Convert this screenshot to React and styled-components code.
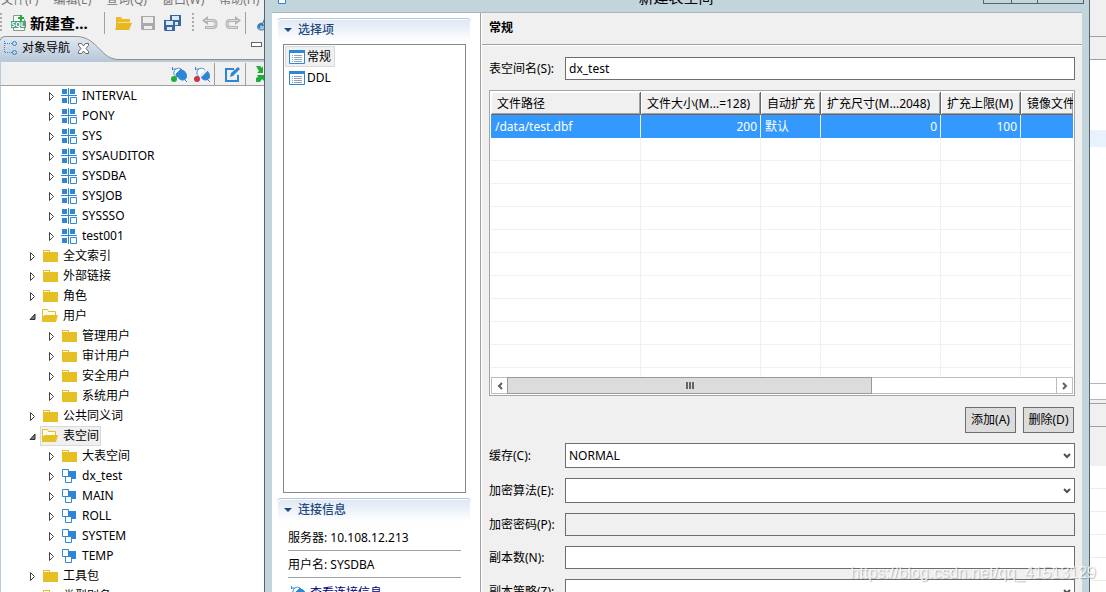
import { useState } from "react";
import styled, { createGlobalStyle, css } from "styled-components";

const tree = [
  { name: "INTERVAL", icon: "schema", level: 2 },
  { name: "PONY", icon: "schema", level: 2 },
  { name: "SYS", icon: "schema", level: 2 },
  { name: "SYSAUDITOR", icon: "schema", level: 2 },
  { name: "SYSDBA", icon: "schema", level: 2 },
  { name: "SYSJOB", icon: "schema", level: 2 },
  { name: "SYSSSO", icon: "schema", level: 2 },
  { name: "test001", icon: "schema", level: 2 },
  { name: "全文索引", icon: "folder", level: 1 },
  { name: "外部链接", icon: "folder", level: 1 },
  { name: "角色", icon: "folder", level: 1 },
  { name: "用户", icon: "folderOpen", level: 1, open: true },
  { name: "管理用户", icon: "folder", level: 2 },
  { name: "审计用户", icon: "folder", level: 2 },
  { name: "安全用户", icon: "folder", level: 2 },
  { name: "系统用户", icon: "folder", level: 2 },
  { name: "公共同义词", icon: "folder", level: 1 },
  { name: "表空间", icon: "folderOpen", level: 1, open: true, selected: true },
  { name: "大表空间", icon: "folder", level: 2 },
  { name: "dx_test", icon: "space", level: 2 },
  { name: "MAIN", icon: "space", level: 2 },
  { name: "ROLL", icon: "space", level: 2 },
  { name: "SYSTEM", icon: "space", level: 2 },
  { name: "TEMP", icon: "space", level: 2 },
  { name: "工具包", icon: "folder", level: 1 },
  { name: "类型别名", icon: "folder", level: 1 },
];

const columns = [
  { title: "文件路径", width: 150, value: "/data/test.dbf" },
  { title: "文件大小(M...=128)", width: 120, value: "200", right: true },
  { title: "自动扩充", width: 60, value: "默认" },
  { title: "扩充尺寸(M...2048)", width: 120, value: "0", right: true },
  { title: "扩充上限(M)", width: 80, value: "100", right: true },
  { title: "镜像文件", width: null, value: "" },
];

const emptyRows = Array.from({ length: 11 }, (_, i) => i);

const Icon = ({ children, width = 16, height = 16 }) => (
  <Svg width={width} height={height} viewBox={`0 0 ${width} ${height}`} aria-hidden="true">
    {children}
  </Svg>
);

const icons = {
  schema: (
    <Icon>
      <path fill="#2e86d6" d="M1 1h5v5H1zM9 1h5v5H9zM1 10h5v5H1zM0 7h16v1H0zM7 0h1v16H7z" />
      <path fill="#fff" stroke="#2e86d6" d="M9.5 9.500h6v6h-6z" />
    </Icon>
  ),
  folder: (
    <Icon>
      <path fill="#e6bf24" d="M1 2h7v2h8v10H1z" />
      <path fill="#fff" d="M2 3h5v1H2z" />
    </Icon>
  ),
  folderOpen: (
    <Icon>
      <path fill="#fffdf2" stroke="#e6bf24" d="M.5 13V1.500h5l1 2h7V8" />
      <path fill="#e6bf24" d="M0 14V9l3-2h13l-2 7z" />
    </Icon>
  ),
  space: (
    <Icon>
      <path fill="#2e86d6" d="M7 3h8v8H7z" />
      <path fill="#fff" stroke="#2e86d6" d="M1.500 1.500h6v7h-6zM4.500 8.500h6v6h-6z" />
    </Icon>
  ),
};

const Plug = ({ off }) => (
  <Icon>
    <g stroke="#2e86d6" fill="none">
      <path d="M1.500 1v3l1-1h3M13 13l3 3" />
      <path fill="#fff" d="M3.500 4.500c2-3 6-3 8 0l-6 6c-3-1-3-4-2-6z" />
      <path fill="#2e86d6" d="M6.500 10.500l6-6c3 2 4 6 2 8.500-3 2-6 1-8-2.500z" />
      {off ? <path stroke="#f0f0f0" strokeWidth="2" d="M5 12L13 4" /> : <path fill="#2e86d6" d="M5 8l5-5 2 2-6 6z" />}
    </g>
    <circle cx="3" cy="13" r="3" fill={off ? "#d0304a" : "#1eae35"} />
  </Icon>
);

const ListIcon = () => (
  <Icon height={14}>
    <path fill="#fff" stroke="#2e86d6" d="M.5.5h15v13H.5z" />
    <path fill="#2e86d6" d="M0 0h16v3H0z" />
    <path stroke="#8fa3b8" d="M3 5.500h1M5 5.500h8M3 7.500h1M5 7.500h8M3 9.500h1M5 9.500h8M3 11.500h1M5 11.500h8" />
  </Icon>
);

const SqlIcon = () => (
  <Icon width={17}>
    <path fill="#f7faf8" stroke="#7d9c8d" d="M3.500 15.500V.5h7l4 4v11z" />
    <path fill="#4d9f83" d="M1 6h15v7H1z" />
    <text x="8" y="12" textAnchor="middle" fontSize="7" fontWeight="bold" fill="#fff">SQL</text>
    <path fill="#1eae35" d="M10 0h2v2h2v2h-2v2h-2V4H8V2h2z" />
  </Icon>
);

const Disk = ({ color, face, x = 0, y = 0, size = 14 }) => (
  <g transform={`translate(${x} ${y})`}>
    <path fill={color} d={`M0 0h${size}v${size}H1l-1-1z`} />
    <path fill={face} d={`M2 1h${size - 4}v${Math.floor(size / 2) - 1}H2z`} />
    <path fill={face} d={`M3 ${size - 4}h${size - 6}v3H3z`} />
  </g>
);

const App = () => {
  const [name, setName] = useState("dx_test");

  return (
    <Screen>
      <GlobalStyle />
      <Workbench>
        <MenuBar>
          <span>文件(F)</span>
          <span>编辑(E)</span>
          <span>查询(Q)</span>
          <span>窗口(W)</span>
          <span>帮助(H)</span>
        </MenuBar>
        <Toolbar>
          <Grip />
          <NewQuery>
            <SqlIcon />
            新建查...
          </NewQuery>
          <Divider />
          <Tools>
            <ToolButton aria-label="打开">
              <Icon width={17}>
                <path fill="#e9bc28" d="M1 14V2h5l1 2h8v3H4z" />
                <path fill="#fbe28a" d="M3 7h12v1H3z" />
                <path fill="#e6b71e" d="M0 15l3-7h14l-3 7z" />
              </Icon>
            </ToolButton>
            <ToolButton aria-label="保存">
              <Icon>
                <Disk color="#aaa" face="#eee" x={1} y={1} />
              </Icon>
            </ToolButton>
            <ToolButton aria-label="全部保存">
              <Icon width={17}>
                <Disk color="#38669f" face="#dce8f5" x={6} size={11} />
                <Disk color="#38669f" face="#dce8f5" y={5} size={11} />
              </Icon>
            </ToolButton>
          </Tools>
          <Grip />
          <Tools>
            <ToolButton aria-label="撤销">
              <Icon>
                <path fill="none" stroke="#b3b3b3" strokeWidth="3" d="M5 5.500h6c4 0 4 7 0 7H3" />
                <path fill="#b3b3b3" d="M0 5.500L6 1v9z" />
                <path fill="none" stroke="#dcdcdc" d="M3 5.500h8c4 0 4 7 0 7H4" />
              </Icon>
            </ToolButton>
            <ToolButton aria-label="重做">
              <Icon>
                <path fill="none" stroke="#b3b3b3" strokeWidth="3" d="M11 5.500H5c-4 0-4 7 0 7h8" />
                <path fill="#b3b3b3" d="M16 5.500L10 1v9z" />
                <path fill="none" stroke="#dcdcdc" d="M13 5.500H5c-4 0-4 7 0 7h7" />
              </Icon>
            </ToolButton>
          </Tools>
          <Divider />
          <Tools>
            <Icon>
              <path fill="#9cc4e4" stroke="#2e78b8" d="M1.500 12.500c0-3 2-5 5-4L9 3v11c-3 2-7 1-7.500-1.500z" />
              <path fill="none" stroke="#2e78b8" strokeWidth="2" d="M4 13a2 2 0 1 1 3-2" />
            </Icon>
          </Tools>
        </Toolbar>

        <TabBar>
          <TabShape width="120" height="24" viewBox="0 0 120 24" aria-hidden="true">
            <defs>
              <linearGradient id="tab" x1="0" y1="0" x2="0" y2="1">
                <stop offset="0" stopColor="#e2e8ee" />
                <stop offset="1" stopColor="#b9c9da" />
              </linearGradient>
            </defs>
            <path fill="url(#tab)" d="M0 24V.5h76c12 0 18 7 24 13s10 10 20 10v.5z" />
            <path fill="none" stroke="#8f8f8f" d="M0 4.500Q1 .5 5 .5h71c12 0 18 7 24 13s10 10 20 10" />
          </TabShape>
          <Tab>
            <Icon width={15}>
              <path stroke="#2e86d6" strokeDasharray="1 1" fill="none" d="M1.500 1v12M2 3.500h7M2 12.500h7" />
              <circle cx="11.500" cy="3.500" r="2" fill="none" stroke="#2e86d6" />
              <circle cx="11.500" cy="12.500" r="2" fill="none" stroke="#2e86d6" />
            </Icon>
            对象导航
            <CloseButton aria-label="关闭">
              <Icon width={11} height={11}>
                <path
                  fill="#fff"
                  stroke="#666"
                  d="M.5.5h3l2 2.500 2-2.500h3v2L8 5.500l2.500 3v2h-3l-2-2.500-2 2.500h-3v-2L3 5.500l-2.500-3z"
                />
              </Icon>
            </CloseButton>
          </Tab>
          <Minimize aria-label="最小化" />
        </TabBar>

        <ViewToolbar>
          <Tools>
            <ToolButton aria-label="连接">
              <Plug />
            </ToolButton>
            <ToolButton aria-label="断开">
              <Plug off />
            </ToolButton>
          </Tools>
          <Divider />
          <Tools>
            <ToolButton aria-label="编辑">
              <Icon>
                <path fill="none" stroke="#2e86d6" strokeWidth="2" d="M9 3H1v12h12V9" />
                <path fill="#2e86d6" d="M5 11l1-4 7-6 2 2-7 7z" />
              </Icon>
            </ToolButton>
          </Tools>
          <Divider />
          <Tools>
            <ToolButton aria-label="展开">
              <Icon>
                <path
                  fill="#1eae35"
                  d="M0 0h4l2 2 1-2v7H1l2-2zM0 16v-4l2-1-1-2h7v6l-2-2-2 3z"
                />
              </Icon>
            </ToolButton>
          </Tools>
        </ViewToolbar>

        <Tree>
          {tree.map((node) => (
            <TreeRow key={node.name} $level={node.level}>
              <Icon width={7} height={9}>
                {node.open ? (
                  <path fill="#777" stroke="#333" d="M6 2v5.500H1z" />
                ) : (
                  <path fill="#fff" stroke="#444" d="M1.500.5v8l4-4z" />
                )}
              </Icon>
              <TreeLabel $selected={node.selected}>
                {icons[node.icon]}
                {node.name}
              </TreeLabel>
            </TreeRow>
          ))}
        </Tree>
      </Workbench>

      <Dialog>
        <TitleBar>
          <Icon width={8} height={12}>
            <path fill="#fff" stroke="#2e86d6" d="M.5.5h7v11h-7z" />
          </Icon>
          <Title>新建表空间</Title>
          <WindowButtons>
            <WindowButton aria-label="最小化" $width={28} />
            <WindowButton aria-label="最大化" $width={26} />
            <WindowButton aria-label="关闭" $width={46} />
          </WindowButtons>
        </TitleBar>
        <Client>
          <Side>
            <SectionTitle>选择项</SectionTitle>
            <OptionList>
              <Option $selected>
                <ListIcon />
                常规
              </Option>
              <Option>
                <ListIcon />
                DDL
              </Option>
            </OptionList>
            <SectionTitle>连接信息</SectionTitle>
            <Info>服务器: 10.108.12.213</Info>
            <Info>用户名: SYSDBA</Info>
            <InfoLink href="#connection">
              <Plug />
              查看连接信息
            </InfoLink>
          </Side>

          <Page>
            <PageTitle>常规</PageTitle>
            <Form>
              <Field>
                <Label htmlFor="name">表空间名(S):</Label>
                <Input id="name" value={name} onChange={(e) => setName(e.target.value)} />
              </Field>

              <TableBox>
                <TableView>
                  <Table>
                    <colgroup>
                      {columns.map((col) => (
                        <col key={col.title} width={col.width || undefined} />
                      ))}
                    </colgroup>
                    <thead>
                      <tr>
                        {columns.map((col) => (
                          <HeadCell key={col.title}>{col.title}</HeadCell>
                        ))}
                      </tr>
                    </thead>
                    <tbody>
                      <FileRow>
                        {columns.map((col) => (
                          <Cell key={col.title} $right={col.right}>
                            {col.value}
                          </Cell>
                        ))}
                      </FileRow>
                      {emptyRows.map((row) => (
                        <tr key={row}>
                          {columns.map((col) => (
                            <Cell key={col.title} />
                          ))}
                        </tr>
                      ))}
                    </tbody>
                  </Table>
                </TableView>
                <ScrollBar>
                  <ScrollButton aria-label="向左滚动">
                    <Icon width={6} height={8}>
                      <path fill="none" stroke="#606060" strokeWidth="2" d="M5 1L2 4l3 3" />
                    </Icon>
                  </ScrollButton>
                  <ScrollTrack>
                    <Thumb>
                      <Icon width={8} height={7}>
                        <path fill="#666" d="M0 0h2v7H0zM3 0h2v7H3zM6 0h2v7H6z" />
                      </Icon>
                    </Thumb>
                  </ScrollTrack>
                  <ScrollButton aria-label="向右滚动">
                    <Icon width={6} height={8}>
                      <path fill="none" stroke="#606060" strokeWidth="2" d="M1 1l3 3-3 3" />
                    </Icon>
                  </ScrollButton>
                </ScrollBar>
              </TableBox>

              <Actions>
                <Button>添加(A)</Button>
                <Button>删除(D)</Button>
              </Actions>

              <Field>
                <Label htmlFor="cache">缓存(C):</Label>
                <SelectField id="cache" options={["NORMAL", "KEEP"]} />
              </Field>
              <Field>
                <Label htmlFor="cipher">加密算法(E):</Label>
                <SelectField id="cipher" options={[""]} />
              </Field>
              <Field>
                <Label htmlFor="password">加密密码(P):</Label>
                <Input id="password" type="password" disabled />
              </Field>
              <Field>
                <Label htmlFor="copies">副本数(N):</Label>
                <Input id="copies" />
              </Field>
              <Field>
                <Label htmlFor="policy">副本策略(Z):</Label>
                <SelectField id="policy" options={[""]} />
              </Field>
            </Form>
          </Page>
        </Client>
      </Dialog>

      <Behind>
        <Strip $height={37} $line="#a0a0a0" />
        <Strip $height={23} $line="#a0a0a0" />
        <Strip $height={70} $color="#fff" />
        <Strip $height={17} $color="#e8f2fe" />
        <Strip $height={237} $color="#fff" $line="#b4b4b4" />
        <Strip $height={16} $color="#fff" $line="#b4b4b4" />
        <Strip $height={4} $line="#a0a0a0" />
        <Strip $height={23} $line="#a0a0a0" />
        <Strip $height={39} />
        {emptyRows.slice(0, 6).map((row) => (
          <Strip key={row} $height={23} $color="#fff" $line="#ececec" />
        ))}
      </Behind>

      <Watermark>https://blog.csdn.net/qq_41513129</Watermark>
    </Screen>
  );
};

const SelectField = ({ id, options }) => (
  <SelectBox>
    <Select id={id}>
      {options.map((option) => (
        <option key={option}>{option}</option>
      ))}
    </Select>
    <Arrow width="8" height="6" viewBox="0 0 8 6" aria-hidden="true">
      <path fill="none" stroke="#505050" strokeWidth="2" d="M1 1l3 3 3-3" />
    </Arrow>
  </SelectBox>
);

const GlobalStyle = createGlobalStyle`
  * {
    box-sizing: border-box;
  }
  body {
    margin: 0;
    overflow: hidden;
    background: #fff;
  }
  body, button, input, select {
    color: #000;
    font-family: "Noto Sans", "Noto Sans CJK SC", sans-serif;
    font-size: 12px;
    line-height: 16px;
  }
`;

const Svg = styled.svg`
  display: block;
  flex: none;
`;

const Screen = styled.div`
  position: relative;
  display: flex;
  height: 100vh;
  overflow: hidden;
`;

const Workbench = styled.div`
  display: flex;
  flex-direction: column;
  flex: none;
  width: 264px;
  overflow: hidden;
  background: #f0f0f0;
`;

const MenuBar = styled.nav`
  display: flex;
  flex: none;
  align-items: flex-end;
  gap: 15px;
  height: 8px;
  padding-left: 1px;
  overflow: hidden;
  color: #777;
  white-space: nowrap;
`;

const Toolbar = styled.div`
  display: flex;
  flex: none;
  align-items: center;
  height: 28px;
  padding-top: 2px;
`;

const Grip = styled.div`
  flex: none;
  width: 2px;
  height: 20px;
  background: repeating-linear-gradient(#aaa 0 2px, transparent 2px 4px);
`;

const plainButton = css`
  flex: none;
  padding: 0;
  border: 0;
  background: none;
`;

const NewQuery = styled.button`
  ${plainButton}
  display: flex;
  align-items: center;
  gap: 3px;
  width: 102px;
  padding-left: 8px;
  font-size: 15px;
  font-weight: bold;
  white-space: nowrap;
`;

const Divider = styled.div`
  flex: none;
  width: 1px;
  height: 22px;
  background: #a0a0a0;
`;

const Tools = styled.div`
  display: flex;
  flex: none;
  gap: 7px;
  padding: 0 5px 0 10px;

  ${Toolbar} > ${Divider} + & {
    gap: 8px;
    padding-right: 11px;
  }

  ${Toolbar} > ${Grip} + & {
    padding: 0 4px 0 8px;
  }
`;

const ToolButton = styled.button`
  ${plainButton}
`;

const TabBar = styled.div`
  position: relative;
  display: flex;
  flex: none;
  justify-content: space-between;
  height: 24px;
  background: linear-gradient(#8f8f8f, #8f8f8f) bottom / 100% 1px no-repeat;
`;

const TabShape = styled.svg`
  position: absolute;
  top: 0;
  left: 0;
`;

const Tab = styled.div`
  position: relative;
  display: flex;
  align-items: center;
  gap: 4px;
  padding-left: 3px;
`;

const CloseButton = styled.button`
  ${plainButton}
  margin-left: 4px;
`;

const Minimize = styled.button`
  position: relative;
  width: 11px;
  height: 5px;
  margin: 6px 2px;
  padding: 0;
  border: 1px solid #666;
  background: #fff;
`;

const ViewToolbar = styled.div`
  display: flex;
  flex: none;
  align-items: center;
  height: 26px;
  padding-left: 160px;
  border-top: 2px solid #b9c9da;
  border-bottom: 1px solid #a0a0a0;
  border-left: 1px solid #b9c9da;

  ${Tools} {
    padding-right: 4px;
  }
`;

const Tree = styled.ul`
  flex: 1;
  margin: 0;
  padding: 0;
  overflow: hidden;
  border-left: 1px solid #b9c9da;
  background: #fff;
  list-style: none;
`;

const TreeRow = styled.li`
  display: flex;
  align-items: center;
  gap: 4px;
  height: 20px;
  padding-left: ${(props) => props.$level * 19 + 9}px;
`;

const TreeLabel = styled.span`
  display: flex;
  align-items: center;
  gap: 5px;
  height: 20px;
  padding: 0 1px;
  border: 1px solid ${(props) => (props.$selected ? "#d9d9d9" : "transparent")};
  background: ${(props) => (props.$selected ? "#f0f0f0" : "none")};
  white-space: nowrap;
`;

const Dialog = styled.div`
  display: flex;
  flex: 1;
  flex-direction: column;
  min-width: 0;
  padding: 0 7px;
  border: solid #5a6468;
  border-width: 0 1px;
  background: #c2d5dc;
`;

const TitleBar = styled.div`
  display: flex;
  flex: none;
  align-items: flex-end;
  justify-content: space-between;
  height: 13px;
  padding-left: 6px;
  border-bottom: 1px solid #a9b6bb;

  > ${Svg} {
    margin-bottom: 8px;
  }
`;

const Title = styled.span`
  flex: 1;
  padding: 0 0 5px 83px;
  font-size: 15px;
  line-height: 20px;
  text-align: center;
`;

const WindowButtons = styled.div`
  display: flex;
  margin: 0 -2px 8px 0;
  border-left: 1px solid #5a6468;
`;

const WindowButton = styled.button`
  width: ${(props) => props.$width}px;
  height: 16px;
  padding: 0;
  border: solid #5a6468;
  border-width: 1px 1px 1px 0;
  background: none;
`;

const Client = styled.div`
  display: flex;
  flex: 1;
  min-height: 0;
  overflow: hidden;
  background: #f0f0f0;
`;

const Side = styled.aside`
  flex: none;
  width: 209px;
  padding: 5px 9px 0 5px;
  border-right: 1px solid #a0a0a0;
  background: #fff;
`;

const SectionTitle = styled.h2`
  display: flex;
  align-items: center;
  gap: 6px;
  height: 24px;
  margin: 0;
  padding: 0 0 2px 7px;
  border-top: 1px solid #b3c6df;
  border-radius: 4px;
  background: linear-gradient(#dfe7f3, #fff);
  box-shadow: inset 1px 1px #fff, inset -1px 0 #fff;
  color: #1c4a80;
  font-size: 12px;
  font-weight: 500;

  &::before {
    content: "";
    border: 4px solid transparent;
    border-top-color: #1c4a80;
    border-bottom: 0;
  }
`;

const OptionList = styled.ul`
  height: 449px;
  margin: 2px 5px 5px 6px;
  padding: 1px;
  border: 1px solid #828790;
  list-style: none;
`;

const Option = styled.li`
  display: flex;
  align-items: center;
  gap: 2px;
  width: fit-content;
  height: 21px;
  padding: 0 3px;
  border: 1px solid ${(props) => (props.$selected ? "#d9d9d9" : "transparent")};
  background: ${(props) => (props.$selected ? "#f0f0f0" : "none")};
`;

const Info = styled.p`
  height: 27px;
  margin: 0 10px 0 11px;
  padding-top: 6px;
  border-bottom: 1px solid #a0a0a0;

  ${SectionTitle} + & {
    height: 29px;
    padding-top: 8px;
  }
`;

const InfoLink = styled.a`
  display: flex;
  align-items: center;
  gap: 4px;
  margin: 7px 0 0 13px;
  color: #00007f;
  text-decoration: none;
`;

const Page = styled.main`
  flex: 1;
  min-width: 0;
  border-left: 1px solid #fff;
`;

const PageTitle = styled.h1`
  height: 32px;
  margin: 0;
  padding: 7px;
  border-bottom: 1px solid #a0a0a0;
  box-shadow: 0 1px #fff;
  font-size: 12px;
  font-weight: bold;
`;

const Form = styled.form`
  display: flex;
  flex-direction: column;
  gap: 10px;
  padding: 12px 7px;
`;

const Field = styled.div`
  display: flex;
  align-items: center;
`;

const Label = styled.label`
  flex: none;
  width: 76px;
`;

const control = css`
  display: block;
  width: 100%;
  border: 1px solid #6d6d6d;
  border-radius: 0;
  background: #fff;
  outline: 0;
`;

const Input = styled.input`
  ${control}
  flex: 1;
  min-width: 0;
  height: 23px;
  padding: 0 3px;

  &:disabled {
    background: #f0f0f0;
  }
`;

const SelectBox = styled.div`
  position: relative;
  flex: 1;
`;

const Select = styled.select`
  ${control}
  height: 25px;
  padding: 0 20px 0 3px;
  appearance: none;
`;

const Arrow = styled.svg`
  position: absolute;
  top: 10px;
  right: 4px;
  pointer-events: none;
`;

const TableBox = styled.div`
  padding: 1px;
  border: 1px solid #a5a5a5;
  background: #fff;
`;

const TableView = styled.div`
  height: 285px;
  overflow: hidden;
`;

const Table = styled.table`
  width: 100%;
  border-collapse: separate;
  border-spacing: 0;
  table-layout: fixed;
`;

const HeadCell = styled.th`
  height: 23px;
  padding: 2px 0 0 6px;
  overflow: hidden;
  border: solid #696969;
  border-width: 0 1px 1px 0;
  background: #f0f0f0;
  box-shadow: inset 1px 1px #fff, inset -1px -1px #a0a0a0;
  font-weight: normal;
  text-align: left;
  white-space: nowrap;

  &:last-child {
    border-right: 0;
  }
`;

const Cell = styled.td`
  height: 23px;
  padding: 2px 3px 0 4px;
  border: solid #f0f0f0;
  border-width: 0 1px 1px 0;
  text-align: ${(props) => (props.$right ? "right" : "left")};

  &:last-child {
    border-right: 0;
  }
`;

const FileRow = styled.tr`
  background: #3399ff;
  color: #fff;

  ${Cell} {
    border-bottom-color: #3399ff;
  }
`;

const ScrollBar = styled.div`
  display: flex;
  height: 17px;
  border: 1px solid #bdbdbd;
`;

const ScrollButton = styled.button`
  ${plainButton}
  display: flex;
  align-items: center;
  justify-content: center;
  width: 15px;
`;

const ScrollTrack = styled.div`
  flex: 1;
  margin: -1px 0;
  border-right: 1px solid #bdbdbd;
`;

const Thumb = styled.div`
  display: flex;
  align-items: center;
  justify-content: center;
  width: 66.5%;
  height: 17px;
  border: 1px solid #999;
  background: #dcdcdc;
`;

const Actions = styled.div`
  display: flex;
  justify-content: flex-end;
  gap: 7px;
  padding: 1px 1px 0 0;
`;

const Button = styled.button`
  min-width: 51px;
  height: 26px;
  padding: 0 4px;
  border: 1px solid #6d6d6d;
  border-radius: 0;
  background: #dcdcdc;
  white-space: nowrap;
`;

const Behind = styled.div`
  flex: none;
  width: 16px;
`;

const Strip = styled.div`
  height: ${(props) => props.$height}px;
  border-bottom: ${(props) => (props.$line ? `1px solid ${props.$line}` : "0")};
  background: ${(props) => props.$color || "#f0f0f0"};
`;

const Watermark = styled.div`
  position: absolute;
  right: 10px;
  bottom: 9px;
  color: rgba(255, 255, 255, 0.8);
  font-family: "Liberation Sans", Arial, sans-serif;
  font-size: 16px;
  line-height: 20px;
  text-shadow: 1px 1px 1px rgba(0, 0, 0, 0.25);
  pointer-events: none;
`;

export default App;
